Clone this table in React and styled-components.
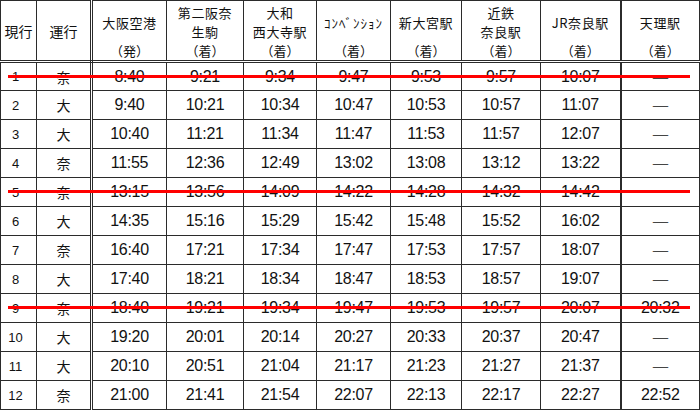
import React from "react";
import styled, { createGlobalStyle } from "styled-components";

const GlobalStyle = createGlobalStyle`
  html, body {
    margin: 0;
    padding: 0;
    background: #ffffff;
  }
`;

const columns = [
  { name: "現行", width: 36, plain: true },
  { name: "運行", width: 55, plain: true },
  { name: "大阪空港", note: "（発）", width: 75 },
  { name: "第二阪奈\n生駒", note: "（着）", width: 77 },
  { name: "大和\n西大寺駅", note: "（着）", width: 73 },
  { name: "ｺﾝﾍﾞﾝｼｮﾝ", note: "（着）", width: 74, small: true },
  { name: "新大宮駅", note: "（着）", width: 71 },
  { name: "近鉄\n奈良駅", note: "（着）", width: 79 },
  { name: "JR奈良駅", note: "（着）", width: 80 },
  { name: "天理駅", note: "（着）", width: 79 },
];

const D = "―";

const rows = [
  { no: 1, op: "奈", times: ["8:40", "9:21", "9:34", "9:47", "9:53", "9:57", "10:07", D], cut: true },
  { no: 2, op: "大", times: ["9:40", "10:21", "10:34", "10:47", "10:53", "10:57", "11:07", D] },
  { no: 3, op: "大", times: ["10:40", "11:21", "11:34", "11:47", "11:53", "11:57", "12:07", D] },
  { no: 4, op: "奈", times: ["11:55", "12:36", "12:49", "13:02", "13:08", "13:12", "13:22", D] },
  { no: 5, op: "奈", times: ["13:15", "13:56", "14:09", "14:22", "14:28", "14:32", "14:42", ""], cut: true },
  { no: 6, op: "大", times: ["14:35", "15:16", "15:29", "15:42", "15:48", "15:52", "16:02", D] },
  { no: 7, op: "奈", times: ["16:40", "17:21", "17:34", "17:47", "17:53", "17:57", "18:07", D] },
  { no: 8, op: "大", times: ["17:40", "18:21", "18:34", "18:47", "18:53", "18:57", "19:07", D] },
  { no: 9, op: "奈", times: ["18:40", "19:21", "19:34", "19:47", "19:53", "19:57", "20:07", "20:32"], cut: true },
  { no: 10, op: "大", times: ["19:20", "20:01", "20:14", "20:27", "20:33", "20:37", "20:47", D] },
  { no: 11, op: "大", times: ["20:10", "20:51", "21:04", "21:17", "21:23", "21:27", "21:37", D] },
  { no: 12, op: "奈", times: ["21:00", "21:41", "21:54", "22:07", "22:13", "22:17", "22:27", "22:52"] },
];

function App() {
  return (
    <Page>
      <GlobalStyle />
      <Table>
        <colgroup>
          {columns.map((c, i) => (
            <col key={i} style={{ width: c.width }} />
          ))}
        </colgroup>
        <thead>
          <tr>
            {columns.map((c, i) =>
              c.plain ? (
                <HeadPlain key={i} $split={i === 1}>
                  {c.name}
                </HeadPlain>
              ) : (
                <HeadCell key={i} $thick={i === 8}>
                  <HeadBox>
                    <StationName $small={c.small}>
                      {c.name.split("\n").map((l, j) => (
                        <span key={j}>{l}</span>
                      ))}
                    </StationName>
                    <Note>{c.note}</Note>
                  </HeadBox>
                </HeadCell>
              )
            )}
          </tr>
        </thead>
        <tbody>
          {rows.map((r) => (
            <Row key={r.no}>
              <NoCell>
                {r.no}
                {r.cut && <Strike />}
              </NoCell>
              <OpCell>{r.op}</OpCell>
              {r.times.map((t, i) => (
                <TimeCell key={i} $thick={i === 6} $dash={t === D}>
                  {t}
                </TimeCell>
              ))}
            </Row>
          ))}
        </tbody>
      </Table>
    </Page>
  );
}

const Page = styled.div`
  width: 700px;
  height: 414px;
  background: #ffffff;
  color: #111111;
  font-family: "Liberation Sans", "Noto Sans CJK JP", sans-serif;
`;

const Table = styled.table`
  border-collapse: collapse;
  table-layout: fixed;
  width: 699px;
  border: 1px solid #2b2b2b;

  td, th {
    border: 1px solid #2b2b2b;
    padding: 0;
    text-align: center;
  }
`;

const HeadPlain = styled.th`
  height: 58px;
  font-family: "Noto Sans CJK JP", sans-serif;
  font-size: 14px;
  font-weight: normal;
  vertical-align: middle;
  border-bottom: 3px double #2b2b2b !important;
  ${(p) => p.$split && "border-right: 3px double #2b2b2b !important;"}
`;

const HeadCell = styled.th`
  height: 58px;
  font-weight: normal;
  vertical-align: top;
  border-bottom: 3px double #2b2b2b !important;
  ${(p) => p.$thick && "border-right: 2px solid #2b2b2b !important;"}
`;

const HeadBox = styled.div`
  display: flex;
  flex-direction: column;
  align-items: center;
  font-family: "Noto Sans CJK JP", sans-serif;
  font-size: 13.5px;
`;

const StationName = styled.div`
  height: 38px;
  margin-top: 2px;
  display: flex;
  flex-direction: column;
  justify-content: center;
  line-height: 19px;
  font-size: 13px;
  letter-spacing: ${(p) => (p.$small ? "1px" : "0.6px")};
  white-space: nowrap;
`;

const Note = styled.div`
  line-height: 19px;
  font-size: 13px;
`;

const Row = styled.tr`
  height: 29px;
`;

const NoCell = styled.td`
  position: relative;
  font-size: 13px;
  text-align: center;
  padding-right: 6px !important;
`;

const OpCell = styled.td`
  font-family: "Noto Sans CJK JP", sans-serif;
  font-size: 14px;
  border-right: 3px double #2b2b2b !important;
`;

const TimeCell = styled.td`
  font-size: 16px;
  letter-spacing: -0.3px;
  ${(p) => p.$dash && `font-family: "Noto Sans CJK JP", sans-serif; font-size: 18px;`}
  ${(p) => p.$thick && "border-right: 2px solid #2b2b2b !important;"}
`;

const Strike = styled.span`
  position: absolute;
  left: 7px;
  top: 50%;
  margin-top: -2px;
  width: 682px;
  height: 3px;
  background: #ff0000;
  z-index: 1;
`;

export default App;
